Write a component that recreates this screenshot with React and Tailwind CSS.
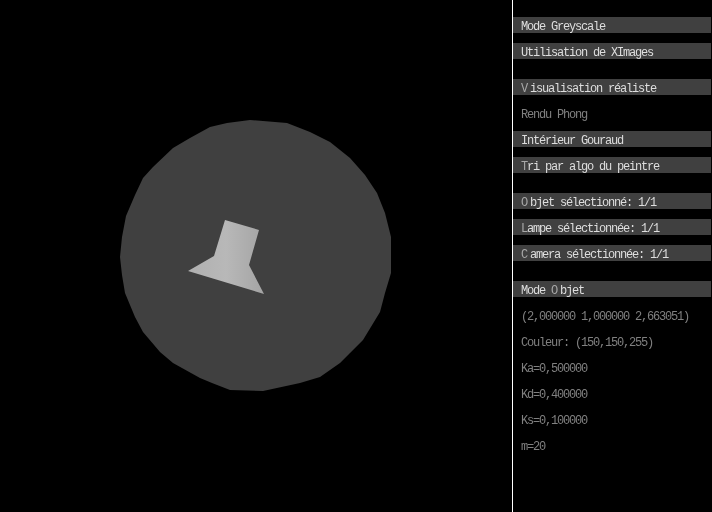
const bar = "h-4 mt-2.5 flex items-center pl-2 pt-[3px] bg-[#404040] text-[#dedede]";
const gapBar = "h-4 mt-[20px] flex items-center pl-2 pt-[3px] bg-[#404040] text-[#dedede]";
const plain = "h-4 mt-2.5 flex items-center pl-2 pt-[3px] text-[#808080]";
const Hot = ({ c, wide }) => <span className={wide ? "text-[#a8a8a8] mr-[3px]" : "text-[#a8a8a8]"}>{c}</span>;

export default function App() {
  return (
    <div className="w-[712px] h-[512px] flex bg-black overflow-hidden">
      <div className="w-[512px] h-[512px] shrink-0">
        <svg width="512" height="512" viewBox="0 0 512 512">
          <defs>
            <linearGradient id="g" gradientUnits="userSpaceOnUse" x1="188" y1="260" x2="264" y2="260">
              <stop offset="0" stopColor="#b0b0b0" />
              <stop offset="0.5" stopColor="#b8b8b8" />
              <stop offset="1" stopColor="#a4a4a4" />
            </linearGradient>
          </defs>
          <polygon fill="#404040" points="120,257 122,237 126,216 135,195 143,178 153,167 173,148 190,138 210,127 227,123 250,120 287,123 310,132 330,142 350,158 365,175 377,193 385,213 391,237 391,273 385,293 380,312 363,340 350,353 340,363 320,377 300,383 263,391 230,390 212,383 200,378 173,363 160,352 143,332 135,317 125,293 122,275" />
          <polygon fill="url(#g)" points="225,220 259,230 249,265 264,294 188,271 214,256" />
        </svg>
      </div>
      <div className="w-[200px] h-[512px] border-l border-white will-change-transform font-['Liberation_Mono',monospace] text-[12px] tracking-[-1.2px] whitespace-pre pt-[7px] pr-px">
        <div className={bar}>Mode Greyscale</div>
        <div className={bar}>Utilisation de XImages</div>
        <div className={gapBar}><Hot c="V" wide />isualisation réaliste</div>
        <div className={plain}>Rendu Phong</div>
        <div className={bar}>Intérieur Gouraud</div>
        <div className={bar}><Hot c="T" />ri par algo du peintre</div>
        <div className={gapBar}><Hot c="O" wide />bjet sélectionné: 1/1</div>
        <div className={bar}><Hot c="L" />ampe sélectionnée: 1/1</div>
        <div className={bar}><Hot c="C" wide />amera sélectionnée: 1/1</div>
        <div className={gapBar}>Mode <Hot c="O" wide />bjet</div>
        <div className={plain}>(2,000000 1,000000 2,663051)</div>
        <div className={plain}>Couleur: (150,150,255)</div>
        <div className={plain}>Ka=0,500000</div>
        <div className={plain}>Kd=0,400000</div>
        <div className={plain}>Ks=0,100000</div>
        <div className={plain}>m=20</div>
      </div>
    </div>
  );
}
